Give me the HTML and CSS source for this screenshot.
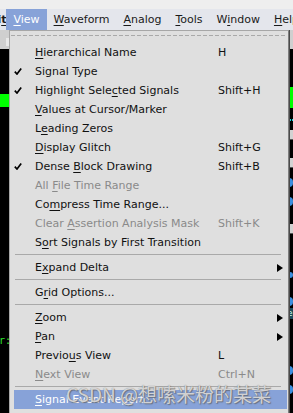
FILE: index.html
```html
<!DOCTYPE html>
<html lang="en">
<head>
  <meta charset="UTF-8">
  <title>SimVision - View menu</title>
  <link rel="stylesheet" href="styles.css">
</head>
<body>
  <div class="app">
    <div class="titlebar"></div>
    <nav class="menubar">
      <span class="mb-item mb-cut">Edi<u>t</u></span>
      <span class="mb-item open"><u>V</u>iew</span>
      <span class="mb-item"><u>W</u>aveform</span>
      <span class="mb-item"><u>A</u>nalog</span>
      <span class="mb-item"><u>T</u>ools</span>
      <span class="mb-item">W<u>i</u>ndow</span>
      <span class="mb-item"><u>H</u>elp</span>
    </nav>

    <div class="workspace">
      <div class="strip left-strip">
        <div class="tb"><span class="tb-btn"></span></div>
        <div class="blk" style="height:45px"></div>
        <div class="wave green" style="height:13px"></div>
        <div class="blk" style="height:229px"></div>
        <div class="sig-text">r:</div>
      </div>
      <div class="canvas"></div>
      <div class="strip right-strip">
        <div class="tb"></div>
        <div class="blk" style="height:38px"></div>
        <div class="wave green" style="height:21px"></div>
        <div class="blk" style="height:11px"></div>
        <div class="dash"></div>
        <div class="blk" style="height:9px"></div>
        <div class="gbtn"></div>
        <div class="blk" style="height:18px"></div>
        <div class="gbtn"></div>
        <div class="blk" style="height:10px"></div>
        <div class="arrow"></div>
        <div class="blk" style="height:10px"></div>
        <div class="arrow"></div>
        <div class="blk" style="height:18px"></div>
        <div class="gbtn"></div>
        <div class="blk" style="height:3px"></div>
        <div class="cyan-bar"></div>
        <div class="blk" style="height:25px"></div>
        <div class="arrow" style="height:6px"></div>
        <div class="blk" style="height:19px"></div>
        <div class="arrow"></div>
        <div class="blk" style="height:2px"></div>
        <div class="teal">e</div>
        <div class="blk" style="height:29px"></div>
        <div class="cyan-bar"></div>
        <div class="blk" style="height:8px"></div>
        <div class="arrow"></div>
        <div class="blk" style="height:10px"></div>
        <div class="arrow"></div>
      </div>
    </div>

    <div class="dropdown">
      <div class="tearoff"></div>
      <div class="mi"><span class="ck"></span><span class="lbl"><u>H</u>ierarchical Name</span><span class="sc">H</span><span></span></div>
      <div class="mi"><span class="ck"><svg viewBox="0 0 8 7"><path d="M0.8 3.6 L3 6 L7.2 0.6"/></svg></span><span class="lbl">Signal Type</span><span class="sc"></span><span></span></div>
      <div class="mi"><span class="ck"><svg viewBox="0 0 8 7"><path d="M0.8 3.6 L3 6 L7.2 0.6"/></svg></span><span class="lbl">Highlight Sele<u>c</u>ted Signals</span><span class="sc">Shift+H</span><span></span></div>
      <div class="mi"><span class="ck"></span><span class="lbl"><u>V</u>alues at Cursor/Marker</span><span class="sc"></span><span></span></div>
      <div class="mi"><span class="ck"></span><span class="lbl">L<u>e</u>ading Zeros</span><span class="sc"></span><span></span></div>
      <div class="mi"><span class="ck"></span><span class="lbl"><u>D</u>isplay Glitch</span><span class="sc">Shift+G</span><span></span></div>
      <div class="mi"><span class="ck"><svg viewBox="0 0 8 7"><path d="M0.8 3.6 L3 6 L7.2 0.6"/></svg></span><span class="lbl">Dense <u>B</u>lock Drawing</span><span class="sc">Shift+B</span><span></span></div>
      <div class="mi off"><span class="ck"></span><span class="lbl">All <u>F</u>ile Time Range</span><span class="sc"></span><span></span></div>
      <div class="mi"><span class="ck"></span><span class="lbl">Co<u>m</u>press Time Range...</span><span class="sc"></span><span></span></div>
      <div class="mi off"><span class="ck"></span><span class="lbl">Clear <u>A</u>ssertion Analysis Mask</span><span class="sc">Shift+K</span><span></span></div>
      <div class="mi"><span class="ck"></span><span class="lbl">S<u>o</u>rt Signals by First Transition</span><span class="sc"></span><span></span></div>
      <div class="sep"></div>
      <div class="mi"><span class="ck"></span><span class="lbl">E<u>x</u>pand Delta</span><span class="sc"></span><span class="sub"></span></div>
      <div class="sep"></div>
      <div class="mi"><span class="ck"></span><span class="lbl">G<u>r</u>id Options...</span><span class="sc"></span><span></span></div>
      <div class="sep"></div>
      <div class="mi"><span class="ck"></span><span class="lbl"><u>Z</u>oom</span><span class="sc"></span><span class="sub"></span></div>
      <div class="mi"><span class="ck"></span><span class="lbl"><u>P</u>an</span><span class="sc"></span><span class="sub"></span></div>
      <div class="mi"><span class="ck"></span><span class="lbl">Previo<u>u</u>s View</span><span class="sc">L</span><span></span></div>
      <div class="mi off"><span class="ck"></span><span class="lbl"><u>N</u>ext View</span><span class="sc">Ctrl+N</span><span></span></div>
      <div class="sep"></div>
      <div class="mi active"><span class="ck"></span><span class="lbl"><u>S</u>ignal Event Report</span><span class="sc"></span><span></span></div>
    </div>

    <div class="watermark">CSDN @想嗦米粉的某菜</div>
  </div>
</body>
</html>
```

FILE: styles.css
```css
html, body {
  margin: 0;
  padding: 0;
}
body {
  width: 293px;
  height: 413px;
  overflow: hidden;
  font-family: 'DejaVu Sans', sans-serif;
  font-size: 11px;
  color: #111;
}
u {
  text-decoration: underline;
  text-underline-offset: 2px;
}
.app {
  position: relative;
  width: 293px;
  height: 413px;
  overflow: hidden;
  background: #000;
  display: flex;
  flex-direction: column;
}
.titlebar {
  height: 9px;
  background: #eeeeee;
}
.menubar {
  height: 21px;
  background: #e4e6ec;
  display: flex;
  align-items: stretch;
  white-space: nowrap;
}
.mb-item {
  padding: 0 7px;
  line-height: 22px;
  color: #1a1a1a;
}
.mb-cut {
  margin-left: -25px;
  padding-right: 0;
  width: 27px;
  font-weight: bold;
}
.mb-item.open {
  background: #87a2d8;
  color: #fff;
}

.workspace {
  flex: 1;
  display: flex;
}
.strip {
  display: flex;
  flex-direction: column;
  overflow: hidden;
}
.left-strip { width: 9px; }
.right-strip { width: 4px; }
.canvas { flex: 1; }
.tb {
  height: 19px;
  background: #cfcfcf;
  position: relative;
}
.tb-btn {
  position: absolute;
  right: 0;
  top: 8px;
  width: 3px;
  height: 8px;
  background: #e8e8e8;
}
.blk { background: #000; }
.green { background: #00ff00; }
.sig-text {
  font-family: 'DejaVu Sans Mono', monospace;
  font-size: 10px;
  color: #2ee62e;
  line-height: 10px;
  margin-left: -1px;
}
.dash {
  height: 2px;
  background: repeating-linear-gradient(90deg, #19d9e6 0 2px, #000 2px 3px);
}
.gbtn {
  height: 9px;
  background: #d2d2d2;
  border-bottom: 1px solid #555;
}
.arrow {
  height: 9px;
  background: #3b8fe0;
  border-radius: 0 5px 5px 0;
}
.cyan-bar {
  height: 10px;
  border-left: 1px solid #1fe3ef;
}
.teal {
  height: 11px;
  background: #1d4b5c;
  color: #cfe;
  font-size: 9px;
  line-height: 11px;
  text-indent: -2px;
}

.dropdown {
  position: absolute;
  left: 9px;
  top: 30px;
  width: 273px;
  height: 390px;
  background: #dfdfdf;
  border-top: 1px solid #a7a7a7;
  border-left: 1px solid #a7a7a7;
  border-right: 1px solid #7d7d7d;
  padding: 0 1px 0 4px;
  box-shadow: 1px 0 0 #4a4a4a;
}
.tearoff {
  height: 12px;
  margin: 0 0 0 -3px;
  background: repeating-linear-gradient(90deg, #a9a9a9 0 4px, transparent 4px 6px) 0 4px / 100% 1px no-repeat;
}
.mi {
  height: 19px;
  display: grid;
  grid-template-columns: 21px 183px 1fr 10px;
  align-items: center;
  white-space: nowrap;
  line-height: 19px;
}
.mi.off { color: #8a8a8a; }
.mi.active {
  background: #87a2d8;
  color: #fff;
}
.ck {
  display: flex;
  align-items: center;
  height: 19px;
}
.ck svg {
  width: 8px;
  height: 7px;
  margin-left: 0;
  fill: none;
  stroke: #000;
  stroke-width: 1.7;
}
.sub {
  width: 0;
  height: 0;
  border-top: 4.5px solid transparent;
  border-bottom: 4.5px solid transparent;
  border-left: 6px solid #000;
}
.sep {
  height: 6px;
  margin: 0 6px 0 1px;
  background: linear-gradient(#a9a9a9, #a9a9a9) 0 2px / 100% 1px no-repeat;
}

.watermark {
  position: absolute;
  left: 66px;
  top: 382px;
  font-family: 'Noto Sans CJK SC', 'DejaVu Sans', sans-serif;
  font-size: 19px;
  line-height: 24px;
  color: rgba(255, 255, 255, 0.7);
  text-shadow: 0 0 1px #6a6a6a, 1px 1px 1px rgba(80, 80, 80, 0.6);
  white-space: nowrap;
}
```
